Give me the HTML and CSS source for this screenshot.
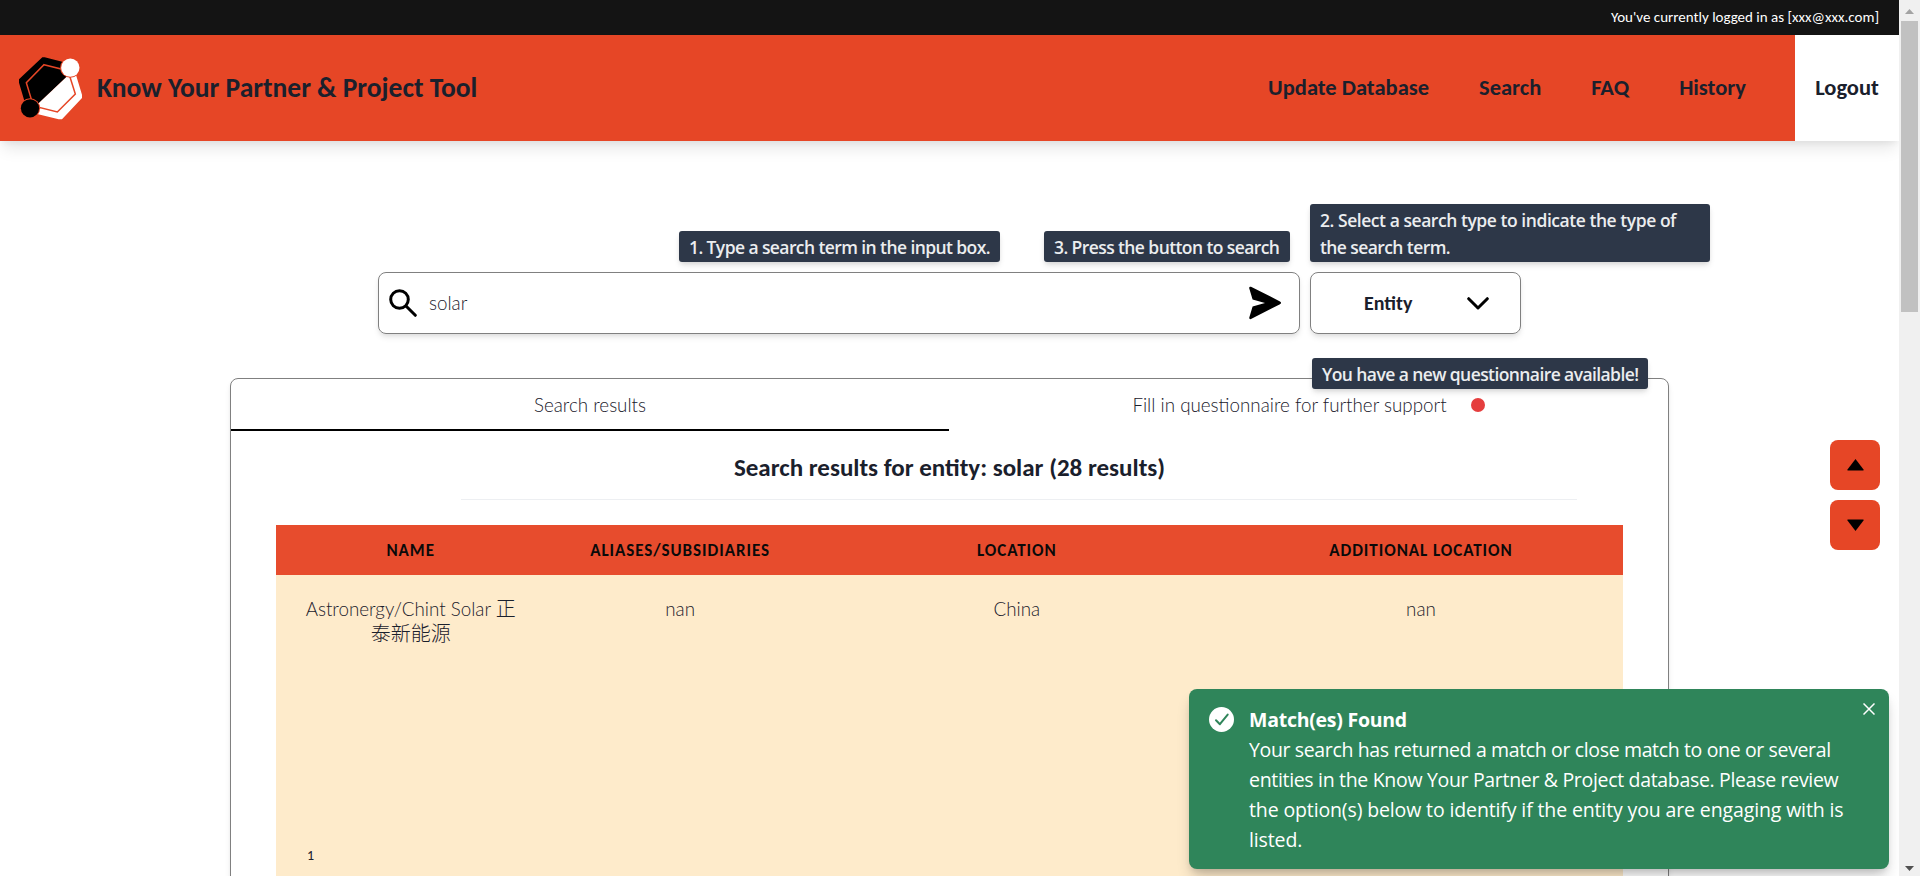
FILE: index.html
```
<!DOCTYPE html>
<html lang="en">
<head>
<meta charset="utf-8">
<title>Know Your Partner &amp; Project Tool</title>
<link rel="stylesheet" href="styles.css">
</head>
<body>
<div class="page">
  <div class="topbar">You've currently logged in as [xxx@xxx.com]</div>
  <header class="header">
    <svg class="logo" viewBox="27 35 189 189">
      <defs>
        <clipPath id="upper"><path d="M0 0H270L0 255Z"/></clipPath>
        <clipPath id="lower"><path d="M270 0V270H0V255Z"/></clipPath>
        <path id="hex" d="M97 36H104L180 55L192 67L199 92L216 148V158L156 222H146L66 202L47 180L27 112V102Z"/>
      </defs>
      <use href="#hex" fill="#000" clip-path="url(#upper)"/>
      <use href="#hex" fill="#fff" clip-path="url(#lower)"/>
      <path d="M102 58L174 76L196 146L142 200L70 182L49 112Z" fill="none" stroke="#e64626" stroke-width="4.5"/>
      <circle cx="181" cy="67" r="30.5" fill="#e64626"/>
      <circle cx="60" cy="189" r="30.5" fill="#e64626"/>
      <circle cx="181" cy="67" r="27.5" fill="#fff"/>
      <circle cx="60" cy="189" r="27.5" fill="#000"/>
    </svg>
    <div class="brand">Know Your Partner &amp; Project Tool</div>
    <nav class="nav">
      <a>Update Database</a><a>Search</a><a>FAQ</a><a>History</a>
    </nav>
    <a class="logout">Logout</a>
  </header>

  <main class="main">
    <div class="search-row">
      <div class="field">
        <svg class="icon-search" viewBox="0 0 28 28"><circle cx="10.5" cy="10.5" r="8.8"/><path d="M17 17L26.3 26.3"/></svg>
        <span class="term">solar</span>
        <svg class="icon-send" viewBox="0 0 34 34"><path d="M1.2 2.3Q1 .2 3 .8L32 15.4Q34.2 16.8 32 18.2L3 33Q1 33.600 1.300 31.600L4.600 20.400L17 17L4.600 13.600Z"/></svg>
        <div class="tip tip-term">1. Type a search term in the input box.</div>
        <div class="tip tip-send">3. Press the button to search</div>
      </div>
      <div class="select">
        <span>Entity</span>
        <svg class="icon-chevron" viewBox="0 0 22 13"><path d="M1.700 1.700L11 11L20.300 1.700"/></svg>
        <div class="tip tip-type"><div class="tip-line">2. Select a search type to indicate the type of</div><div>the search term.</div></div>
      </div>
    </div>

    <section class="panel">
      <div class="tabs">
        <div class="tab active">Search results</div>
        <div class="tab"><span>Fill in questionnaire for further support</span><i class="dot"></i>
          <div class="tip tip-quest">You have a new questionnaire available!</div>
        </div>
      </div>
      <h2 class="title">Search results for entity: solar (28 results)</h2>
      <div class="rule"></div>
      <div class="table">
        <div class="row head"><div>NAME</div><div>ALIASES/SUBSIDIARIES</div><div>LOCATION</div><div>ADDITIONAL LOCATION</div></div>
        <div class="row body"><div>Astronergy/Chint Solar <span class="cjk">正<br>泰新能源</span></div><div>nan</div><div>China</div><div>nan</div></div>
        <div class="index">1</div>
      </div>
    </section>
  </main>

  <div class="jump">
    <div class="jump-btn"><svg viewBox="0 0 17 12"><path d="M8.500 0L16.500 10.500V11.500H.5V10.500Z"/></svg></div>
    <div class="jump-btn"><svg viewBox="0 0 17 12"><path d="M8.500 12L16.500 1.500V.5H.5V1.500Z"/></svg></div>
  </div>

  <div class="toast">
    <svg class="toast-check" viewBox="0 0 25 25"><circle cx="12.500" cy="12.500" r="12.500" fill="#fff"/><path d="M7 13.300L10.900 17.200L18.700 7.600" fill="none" stroke="#2f855a" stroke-width="2" stroke-linecap="round" stroke-linejoin="round"/></svg>
    <div class="toast-text">
      <div class="toast-title">Match(es) Found</div>
      <div class="l1">Your search has returned a match or close match to one or several</div>
      <div class="l2">entities in the Know Your Partner &amp; Project database. Please review</div>
      <div class="l3">the option(s) below to identify if the entity you are engaging with is</div>
      <div class="l3">listed.</div>
    </div>
    <svg class="toast-close" viewBox="0 0 12 12"><path d="M.5 .5L11.500 11.500M11.500 .5L.5 11.500"/></svg>
  </div>
</div>
<div class="scrollbar">
  <svg class="sb-up" viewBox="0 0 9 5"><path d="M4.500 0L9 5H0Z"/></svg>
  <div class="thumb"></div>
  <svg class="sb-down" viewBox="0 0 9 5"><path d="M0 0H9L4.500 5Z"/></svg>
</div>
</body>
</html>
```
FILE: styles.css
```
* { box-sizing: border-box; }
body {
  margin: 0;
  display: flex;
  height: 876px;
  overflow: hidden;
  background: #fff;
  color: #1a202c;
  font: 20px/30px Carlito, "Noto Sans CJK SC", sans-serif;
}
svg { display: block; flex: none; }
.page { position: relative; flex: 1; height: 876px; overflow: hidden; display: flex; flex-direction: column; }

.topbar { flex: none; height: 35px; padding-right: 20px; background: #141414; color: #fff; font-size: 15px; line-height: 34px; text-align: right; }

.header { position: relative; flex: none; display: flex; align-items: center; height: 106px; background: #e64626; box-shadow: 0 10px 15px -3px rgba(0,0,0,.1), 0 4px 6px -2px rgba(0,0,0,.05); }
.logo { width: 63px; height: 63px; margin-left: 19px; }
.brand { margin-left: 15px; font-size: 27.5px; font-weight: 700; line-height: 40px; }
.nav { margin-left: auto; display: flex; gap: 50px; margin-right: 49px; font-size: 22.5px; font-weight: 700; }
.logout { width: 104px; align-self: stretch; display: flex; align-items: center; justify-content: center; background: #fff; font-size: 22.5px; font-weight: 700; }

.main { flex: 1; padding-top: 131px; display: flex; flex-direction: column; align-items: center; }
.search-row { display: flex; gap: 10px; height: 62px; }
.field, .select { position: relative; display: flex; align-items: center; border: 1px solid #808080; border-radius: 8px; box-shadow: 0 4px 6px -1px rgba(0,0,0,.1), 0 2px 4px -1px rgba(0,0,0,.06); }
.field { width: 922px; padding: 0 17px 0 10px; }
.select { width: 211px; padding-left: 53px; font-weight: 700; }
.icon-search { width: 28px; height: 28px; fill: none; stroke: #000; stroke-width: 3; stroke-linecap: round; }
.term, .tab, .body { font-family: Lato, Carlito, sans-serif; font-size: 18.8px; font-weight: 300; color: #1a202c; }
.term { margin-left: 12px; }
.icon-send { width: 34px; height: 34px; margin-left: auto; }
.icon-chevron { width: 22px; height: 13px; margin-left: 55px; fill: none; stroke: #000; stroke-width: 3; stroke-linecap: round; stroke-linejoin: round; }

.tip { position: absolute; z-index: 2; padding: 3px 10px 1px; border-radius: 3px; background: #2d3748; color: #ebedef; font: 600 17.5px/27px "Open Sans", sans-serif; letter-spacing: -.59px; white-space: nowrap; box-shadow: 0 4px 6px -1px rgba(0,0,0,.12), 0 2px 4px -1px rgba(0,0,0,.08); }
.tip-term { left: 300px; bottom: 71px; width: 321px; }
.tip-send { right: 9px; bottom: 71px; width: 246px; }
.tip-type { left: -1px; bottom: 71px; width: 400px; }
.tip-line { letter-spacing: -.45px; }
.tip-quest { left: 363px; top: -21px; width: 336px; }

.panel { width: 1439px; height: 600px; margin-top: 44px; border: 1px solid #808080; border-radius: 8px; box-shadow: 0 4px 6px -1px rgba(0,0,0,.1), 0 2px 4px -1px rgba(0,0,0,.06); }
.tabs { display: flex; height: 52px; }
.tab { position: relative; width: 719px; padding-top: 1px; display: flex; align-items: center; justify-content: center; border-bottom: 2px solid transparent; }
.tab.active { width: 718px; border-bottom-color: #000; }
.dot { width: 14px; height: 14px; margin-left: 24px; border-radius: 50%; background: #e53e3e; }
.title { margin: 22px 0 0; font-size: 25px; line-height: 30px; text-align: center; }
.rule { width: 1116px; height: 1px; margin: 16px 0 0 230px; background: #edeff2; }
.table { margin: 25px 45px 0; height: 420px; background: #feebcb; }
.row { display: grid; grid-template-columns: 2fr 2fr 3fr 3fr; text-align: center; }
.head { height: 50px; background: #e74c2d; color: #0a0a0a; font-size: 17px; font-weight: 700; line-height: 51px; letter-spacing: .95px; }
.body { height: 261px; padding-top: 21px; line-height: 25px; }
.cjk { font-family: "Noto Sans CJK SC", sans-serif; font-size: 20px; line-height: 24px; }
.index { padding-left: 31px; font-size: 14px; line-height: 40px; }

.jump { position: absolute; left: 1830px; top: 440px; display: flex; flex-direction: column; gap: 10px; }
.jump-btn { width: 50px; height: 50px; border-radius: 8px; background: #e64626; display: flex; align-items: center; justify-content: center; }
.jump-btn svg { width: 17px; height: 12px; }

.toast { position: absolute; z-index: 3; left: 1189px; top: 689px; width: 700px; height: 180px; padding: 16px 14px 0 20px; display: flex; align-items: flex-start; border-radius: 8px; background: #2f855a; color: #fff; font: 19.500px/30px "Open Sans", sans-serif; white-space: nowrap; box-shadow: 0 10px 15px -3px rgba(0,0,0,.2), 0 4px 6px -2px rgba(0,0,0,.12); }
.toast-check { width: 25px; height: 25px; margin-top: 2px; }
.toast-text { margin-left: 15px; }
.toast-title { font-weight: 700; letter-spacing: -.25px; }
.l1 { letter-spacing: -.36px; }
.l2 { letter-spacing: -.32px; }
.l3 { letter-spacing: -.13px; }
.toast-close { width: 12px; height: 12px; margin: -2px 0 0 auto; fill: none; stroke: #fff; stroke-width: 1.500; }

.scrollbar { width: 21px; height: 876px; padding: 9px 2px 5px; display: flex; flex-direction: column; align-items: center; background: #f0f0f0; }
.sb-up { width: 9px; height: 5px; fill: #a3a3a3; }
.thumb { width: 17px; height: 291px; margin-top: 7px; background: #c1c1c1; }
.sb-down { width: 9px; height: 5px; margin-top: auto; fill: #505050; }
```
